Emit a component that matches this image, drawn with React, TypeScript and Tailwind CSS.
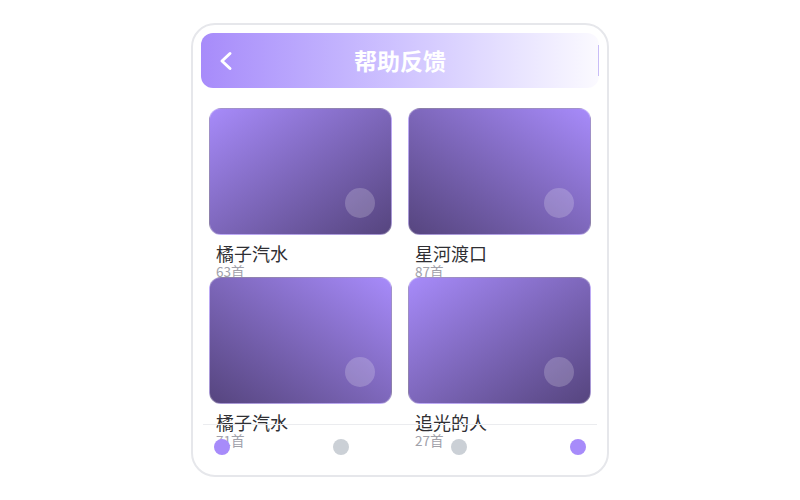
const playlists = [
  { title: '橘子汽水', count: '63首', dir: 'bg-gradient-to-br' },
  { title: '星河渡口', count: '87首', dir: 'bg-gradient-to-bl' },
  { title: '橘子汽水', count: '71首', dir: 'bg-gradient-to-bl' },
  { title: '追光的人', count: '27首', dir: 'bg-gradient-to-br' },
];

const tabs = [true, false, false, true];

export default function App() {
  return (
    <div
      className="w-full h-screen bg-white flex items-center justify-center"
      style={{ fontFamily: '"Noto Sans CJK SC", "Noto Sans", sans-serif' }}
    >
      <div className="relative w-[418px] h-[454px] rounded-[24px] border-2 border-[#e6e7eb] bg-white overflow-hidden flex flex-col">
        {/* Header */}
        <div className="relative m-2 mb-0 h-[55px] rounded-xl bg-gradient-to-r from-[#a78bfa] to-[#fbfaff] flex items-center justify-center">
          <button className="absolute left-[18px] top-1/2 -translate-y-1/2 text-white">
            <svg width="14" height="20" viewBox="0 0 14 20" fill="none">
              <polyline
                points="11,2.5 3,10 11,17.5"
                stroke="currentColor"
                strokeWidth="3"
                strokeLinecap="round"
                strokeLinejoin="round"
              />
            </svg>
          </button>
          <h1 className="text-[23px] font-bold text-white leading-none">帮助反馈</h1>
          <span className="absolute right-0 top-3 bottom-3 w-px bg-[#c9bdf7]" />
        </div>

        {/* Grid */}
        <div className="grid grid-cols-2 gap-4 px-4 pt-5">
          {playlists.map((item, i) => (
            <div key={i} className="h-[153px]">
              <div
                className={`relative h-[127px] rounded-xl border border-white/30 ${item.dir} from-[#a78bfa] to-[#56457f]`}
              >
                <div className="absolute right-4 bottom-4 w-[30px] h-[30px] rounded-full bg-white/20" />
              </div>
              <div className="pl-[7px] mt-[8px]">
                <div className="text-[18px] leading-[20px] text-[#2f2f33]">{item.title}</div>
                <div className="text-[13.5px] leading-[16px] text-[#a1a1aa]">{item.count}</div>
              </div>
            </div>
          ))}
        </div>

        {/* Tab bar */}
        <div className="absolute left-[10px] right-[10px] bottom-0 h-[51px] border-t border-[#ebecef] flex justify-between items-start pt-[14px] px-[11px]">
          {tabs.map((active, i) => (
            <div
              key={i}
              className={`w-4 h-4 rounded-full ${active ? 'bg-[#a78bfa]' : 'bg-[#cbd0d6]'}`}
            />
          ))}
        </div>
      </div>
    </div>
  );
}
